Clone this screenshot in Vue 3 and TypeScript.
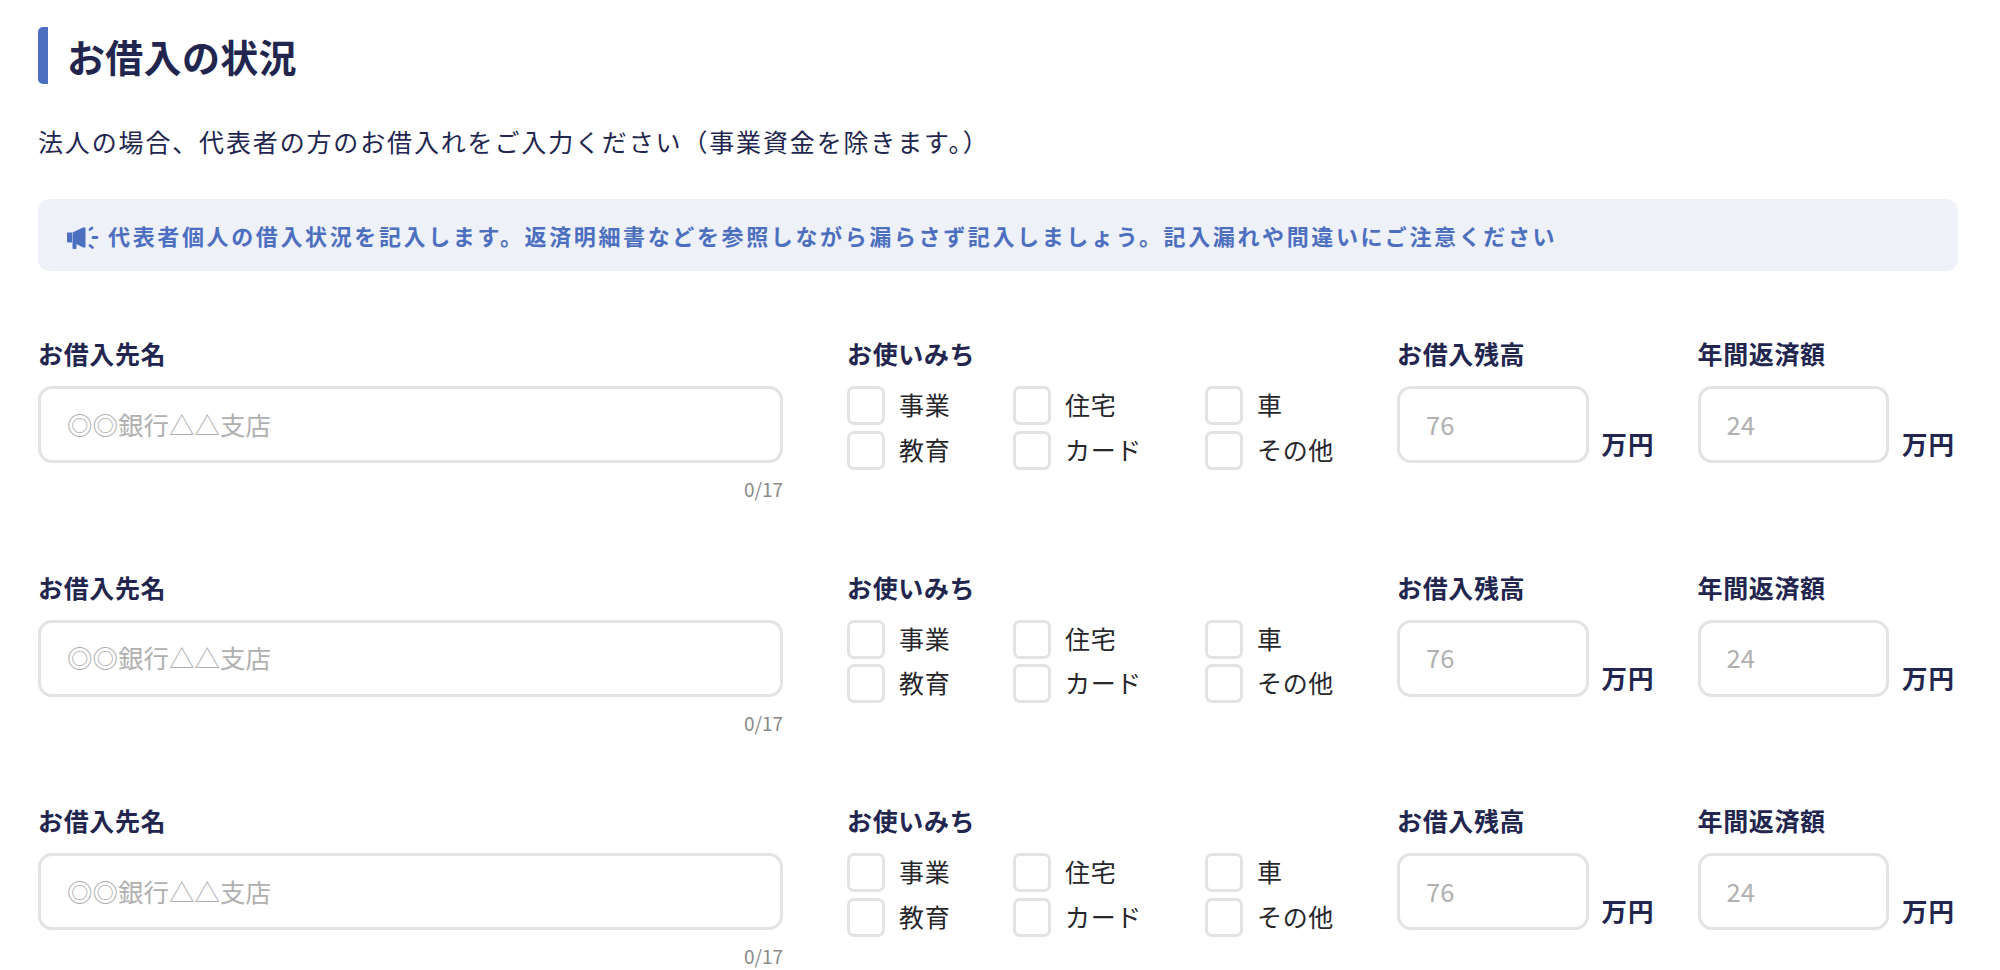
<script setup lang="ts">
const rows = [1, 2, 3]
const uses = ['事業', '住宅', '車', '教育', 'カード', 'その他']
</script>

<template>
  <main class="page">
    <h1 class="title">お借入の状況</h1>
    <p class="lead">法人の場合、代表者の方のお借入れをご入力ください（事業資金を除きます。）</p>
    <div class="notice">
      <svg class="mega" viewBox="0 0 32 24" aria-hidden="true">
        <path d="M1 6.500h4v10H1a1 1 0 0 1-1-1v-8a1 1 0 0 1 1-1z" fill="#4d6fbf" />
        <path d="M5.500 6.500 16 1.500h2.500v20H16l-6.500-3.500V22a1 1 0 0 1-1 1H6.500a1 1 0 0 1-1-1z" fill="#4d6fbf" />
        <path d="M23 3.500 25 2M26 11.500h4M23 19.500l2.500 2" stroke="#4d6fbf" stroke-width="2.800" stroke-linecap="round" fill="none" />
      </svg>
      <span>代表者個人の借入状況を記入します。返済明細書などを参照しながら漏らさず記入しましょう。記入漏れや間違いにご注意ください</span>
    </div>
    <section v-for="r in rows" :key="r" class="row">
      <div class="name">
        <div class="label">お借入先名</div>
        <div class="box">◎◎銀行△△支店</div>
        <div class="count">0/17</div>
      </div>
      <div class="use">
        <div class="label">お使いみち</div>
        <div class="checks">
          <div v-for="u in uses" :key="u" class="check">
            <span class="tick"></span>
            <span class="text">{{ u }}</span>
          </div>
        </div>
      </div>
      <div class="money">
        <div class="label">お借入残高</div>
        <div class="line">
          <div class="box small">76</div>
          <span class="unit">万円</span>
        </div>
      </div>
      <div class="money">
        <div class="label">年間返済額</div>
        <div class="line">
          <div class="box small">24</div>
          <span class="unit">万円</span>
        </div>
      </div>
    </section>
  </main>
</template>

<style>
html, body { background: #fff; }
</style>

<style scoped>
.page {
  box-sizing: border-box;
  width: 2000px;
  height: 970px;
  overflow: hidden;
  padding: 27px 42px 0 38px;
  font-family: "Noto Sans CJK JP", "Noto Sans", sans-serif;
  color: #22264f;
}
.title {
  margin: 0;
  height: 57px;
  line-height: 57px;
  padding-left: 19px;
  border-left: 10px solid #4d6fbf;
  border-radius: 5px;
  font-size: 38px;
  font-weight: 700;
  letter-spacing: 0.3px;
}
.lead {
  margin: 39px 0 0;
  height: 36px;
  line-height: 36px;
  font-size: 25px;
  letter-spacing: 1.850px;
  font-weight: 400;
}
.notice {
  margin-top: 40px;
  height: 72px;
  background: #eef1f8;
  border-radius: 12px;
  padding-left: 29px;
  display: flex;
  align-items: center;
  gap: 9px;
  color: #4d6fbf;
  font-size: 22px;
  font-weight: 700;
  letter-spacing: 2.630px;
}
.mega { width: 32px; height: 24px; flex: none; margin-top: 5px; }
.row {
  display: grid;
  grid-template-columns: 745px 614px 300.500px 262px;
  height: 233.500px;
  padding-top: 64px;
  box-sizing: border-box;
}
.label {
  height: 36px;
  line-height: 36px;
  font-size: 25px;
  font-weight: 700;
  letter-spacing: 0.650px;
  margin-bottom: 15px;
}
.box {
  box-sizing: border-box;
  height: 77px;
  border: 3px solid #e3e3e1;
  border-radius: 14px;
  padding: 0 0 3px 26px;
  display: flex;
  align-items: center;
  color: #b0b0b0;
  font-size: 25.500px;
  background: #fff;
}
.count {
  text-align: right;
  margin-top: 13px;
  font-size: 19px;
  line-height: 26px;
  color: #8a8a8a;
}
.use { padding-left: 64px; }
.checks {
  display: grid;
  grid-template-columns: 166px 192px auto;
  row-gap: 5.500px;
}
.check { display: flex; align-items: center; height: 39px; }
.tick {
  box-sizing: border-box;
  width: 38px;
  height: 39px;
  border: 3px solid #e3e3e1;
  border-radius: 7px;
  margin-right: 14px;
  flex: none;
}
.text {
  padding-bottom: 3px;
  font-size: 25px;
  letter-spacing: 0.650px;
  color: #26262b;
}
.line { display: flex; align-items: flex-end; }
.small { width: 191.500px; }
.unit {
  margin: 0 0 2px 13px;
  font-size: 25.500px;
  font-weight: 700;
  letter-spacing: 1px;
  line-height: 36px;
}
</style>
